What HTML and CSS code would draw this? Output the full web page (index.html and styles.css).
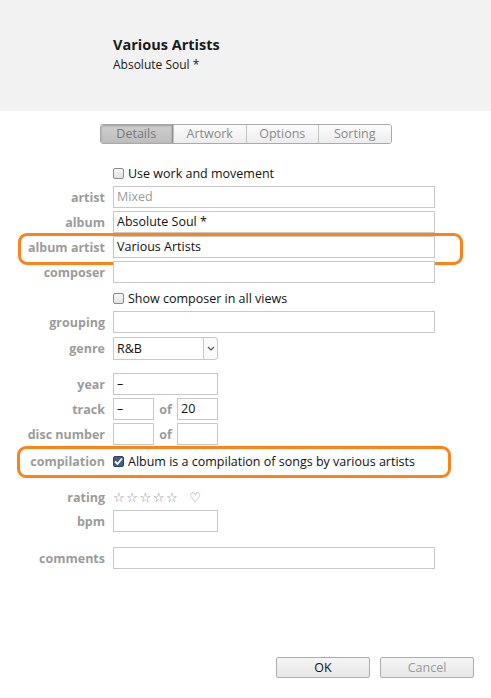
FILE: index.html
```html
<!DOCTYPE html>
<html>
<head>
<meta charset="utf-8">
<link rel="stylesheet" href="styles.css">
</head>
<body>
<div class="header">
  <div class="title">Various Artists</div>
  <div class="subtitle">Absolute Soul *</div>
</div>
<div class="tabs">
  <div class="tab active">Details</div>
  <div class="tab">Artwork</div>
  <div class="tab">Options</div>
  <div class="tab">Sorting</div>
</div>
<div class="form">
  <div class="row r-check1"><div class="label"></div><div class="check"><span class="box"></span>Use work and movement</div></div>
  <div class="row r-artist"><div class="label">artist</div><div class="field wide muted">Mixed</div></div>
  <div class="row r-std"><div class="label">album</div><div class="field wide">Absolute Soul *</div></div>
  <div class="row r-std hl-wrap"><div class="label">album artist</div><div class="field wide">Various Artists</div><div class="hl hl-aa"></div></div>
  <div class="row r-std"><div class="label">composer</div><div class="field wide"></div></div>
  <div class="row r-check2"><div class="label"></div><div class="check"><span class="box"></span>Show composer in all views</div></div>
  <div class="row r-group"><div class="label">grouping</div><div class="field wide"></div></div>
  <div class="row r-genre"><div class="label">genre</div><div class="select"><div class="sel-val">R&amp;B</div><div class="sel-btn"><svg width="8" height="5" viewBox="0 0 8 5"><path d="M1 1 L4 4 L7 1" fill="none" stroke="#555" stroke-width="1.2"/></svg></div></div></div>
  <div class="row r-year"><div class="label">year</div><div class="field mid">–</div></div>
  <div class="row r-std"><div class="label">track</div><div class="field small">–</div><span class="of">of</span><div class="field small">20</div></div>
  <div class="row r-std"><div class="label">disc number</div><div class="field small"></div><span class="of">of</span><div class="field small"></div></div>
  <div class="row r-comp hl-wrap"><div class="label">compilation</div><div class="check"><span class="box checked"><svg width="11" height="11" viewBox="0 0 11 11"><path d="M2 5.5 L4.5 8 L9 2.5" fill="none" stroke="#fff" stroke-width="1.8"/></svg></span>Album is a compilation of songs by various artists</div><div class="hl hl-comp"></div></div>
  <div class="row r-rating"><div class="label">rating</div><div class="stars">☆☆☆☆☆</div><div class="heart">♡</div></div>
  <div class="row r-bpm"><div class="label">bpm</div><div class="field mid"></div></div>
  <div class="row r-comments"><div class="label">comments</div><div class="field wide"></div></div>
</div>
<div class="footer">
  <div class="btn ok">OK</div>
  <div class="btn cancel">Cancel</div>
</div>
</body>
</html>
```
FILE: styles.css
```css
* { box-sizing: border-box; }
html, body { margin: 0; padding: 0; background: #fff; }
body {
  width: 491px; height: 698px; overflow: hidden;
  font-family: "Open Sans", "Noto Sans", sans-serif;
  font-size: 12.5px; color: #111;
}
.header {
  height: 111px; background: #f2f2f2;
  padding: 35px 0 0 113px;
}
.title { font-weight: 700; font-size: 14.5px; line-height: 20px; color: #1a1a1a; }
.subtitle { font-size: 12px; line-height: 18px; margin-top: 1px; color: #1a1a1a; }
.tabs {
  display: flex; width: 292px; margin: 13px auto 0; height: 20px;
  border: 1px solid #a9a9a9; border-radius: 3px; overflow: hidden;
}
.tab {
  flex: 1; text-align: center; line-height: 18px; font-size: 12.5px; color: #8a8a8a;
  background: linear-gradient(#fdfdfd, #ececec);
  border-left: 1px solid #c4c4c4;
}
.tab:first-child { border-left: none; }
.tab.active {
  background: linear-gradient(#cfcfcf, #bdbdbd);
  box-shadow: inset 0 1px 2px rgba(0,0,0,0.25);
  color: #777; border-right: 1px solid #8e8e8e;
}
.form { margin-top: 18px; }
.row { display: flex; align-items: center; height: 22px; margin-top: 3px; position: relative; }
.label {
  width: 105px; text-align: right; font-weight: 700; color: #9b9b9b;
  font-size: 12.5px; margin-right: 8px; flex: none;
}
.field {
  height: 22px; border: 1px solid #c8c8c8; background: #fff;
  padding: 0 3px; line-height: 20px; font-size: 12.5px; color: #111;
}
.field.wide { width: 322px; }
.field.mid { width: 105px; }
.field.small { width: 41px; }
.field.muted { color: #9a9a9a; }
.of { width: 23px; text-align: center; font-weight: 700; color: #9b9b9b; }
.check { display: flex; align-items: center; white-space: nowrap; }
.box {
  width: 11px; height: 11px; border: 1px solid #8a8a8a; border-radius: 2px;
  background: linear-gradient(#f6f6f6, #e2e2e2); margin-right: 4px; display: inline-block; position: relative;
}
.box.checked { background: #3f5f86; border-color: #2f4564; }
.box.checked svg { position: absolute; left: -1px; top: -1px; }
.r-check1 { margin-top: 0; }
.r-artist { margin-top: 2px; }
.r-check2 { margin-top: 4px; }
.r-group { margin-top: 2px; }
.r-genre { margin-top: 4px; }
.r-year { margin-top: 14px; }
.r-comp { margin-top: 5px; }
.r-rating { margin-top: 14px; }
.r-bpm { margin-top: 2px; }
.r-comments { margin-top: 15px; }
.select { display: flex; height: 23px; }
.sel-val {
  width: 91px; border: 1px solid #c8c8c8; padding: 0 3px; line-height: 21px; color: #111;
}
.sel-btn {
  width: 14px; border: 1px solid #c8c8c8; border-left: none; border-radius: 0 4px 4px 0;
  display: flex; align-items: center; justify-content: center; background: #fafafa;
}
.stars { color: #888; font-size: 13px; letter-spacing: 1.6px; font-family: "DejaVu Sans", sans-serif; }
.heart { color: #888; font-size: 13px; margin-left: 10px; font-family: "DejaVu Sans", sans-serif; }
.hl {
  position: absolute; border: 3.5px solid #ff8218; border-radius: 9px; pointer-events: none;
}
.hl-aa { left: 18px; top: -3px; width: 445px; height: 32px; }
.hl-comp { left: 17px; top: -4px; width: 434px; height: 32px; }
.footer { display: flex; justify-content: flex-end; gap: 10px; padding-right: 17px; margin-top: 88px; }
.btn {
  width: 94px; height: 21px; border: 1px solid #adadad; border-radius: 2px;
  background: linear-gradient(#f5f5f5, #e6e6e6); text-align: center; line-height: 19px; font-size: 12.5px;
}
.btn.ok { color: #111; }
.btn.cancel { color: #999; }
```
